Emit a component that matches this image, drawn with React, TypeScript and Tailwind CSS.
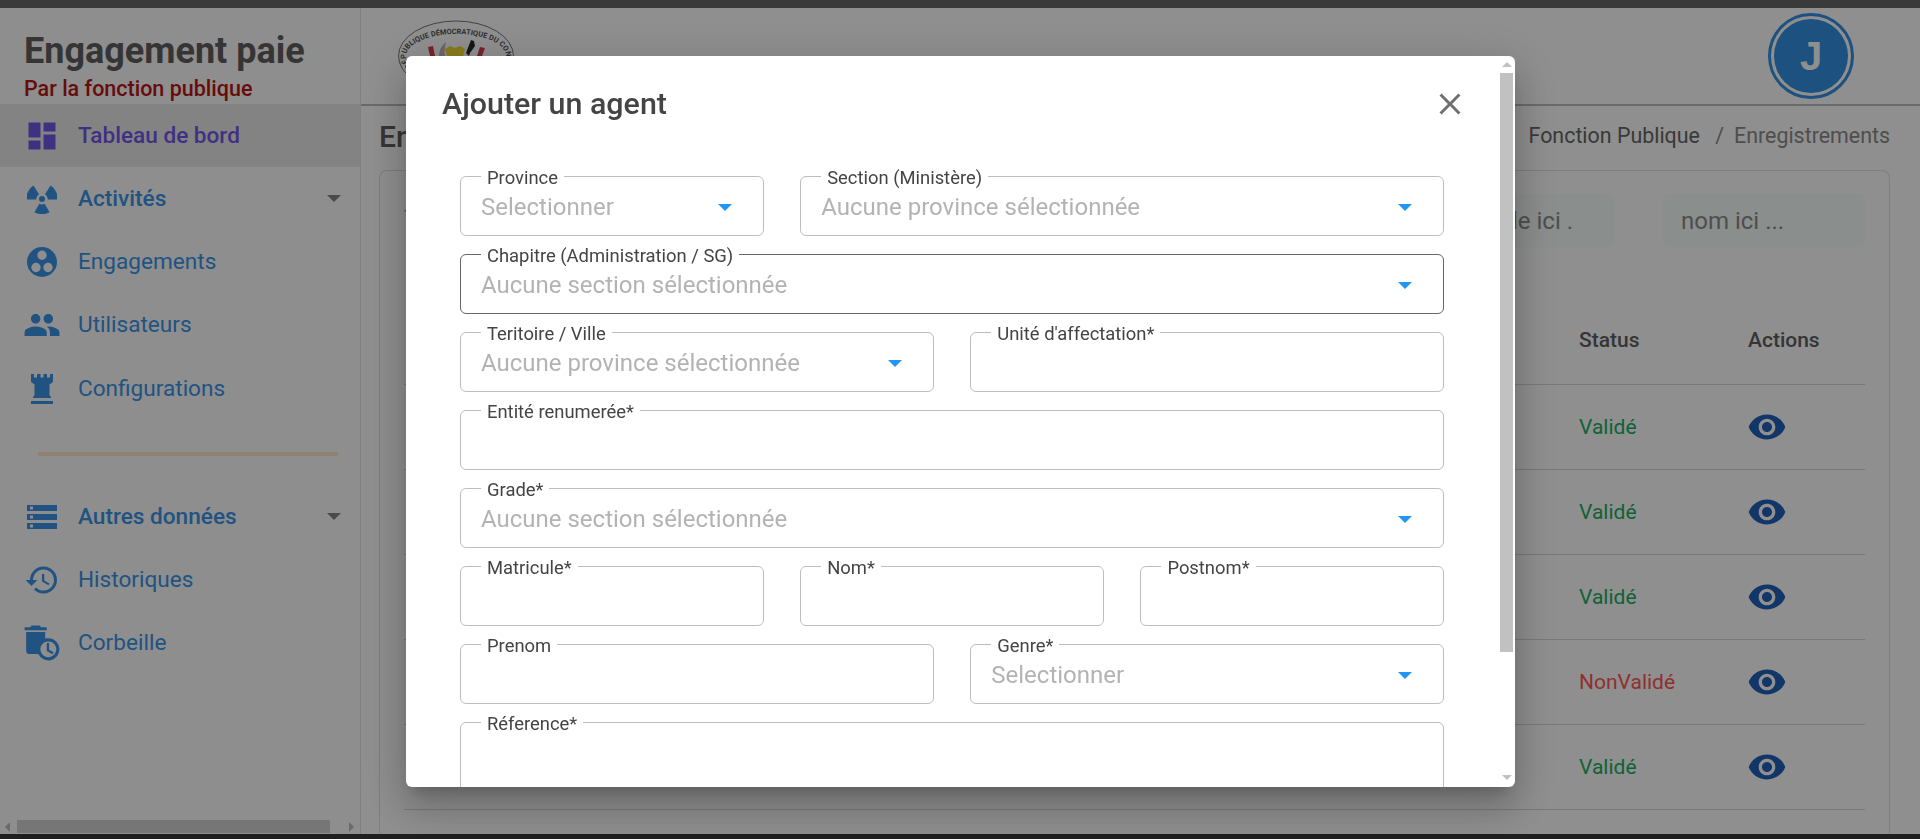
import type { ReactNode } from "react";
import { MdAutoDelete, MdClose, MdDashboard, MdHistory, MdPeople, MdStorage, MdVisibility } from "react-icons/md";

type NavItem = { label: string; icon: ReactNode; strong?: boolean; caret?: boolean };

function RadiationIcon() {
  return (
    <svg width="30" height="30" viewBox="0 0 30 30" fill="currentColor">
      <path d="M18 10.2L23.5 1.6A16 16 0 0 1 30.5 15.5H20.8A5.8 5.8 0 0 0 18 10.2Z" />
      <path d="M12 10.2L6.5 1.6A16 16 0 0 0 -0.5 15.5H9.2A5.8 5.8 0 0 1 12 10.2Z" />
      <path d="M17.6 19.8L22.6 28.2A15.5 15.5 0 0 1 7.4 28.2L12.4 19.8A5.8 5.8 0 0 0 17.6 19.8Z" />
      <circle cx="15" cy="15" r="3" />
    </svg>
  );
}

function CirclesIcon() {
  return (
    <svg width="30" height="30" viewBox="0 0 30 30" fill="currentColor">
      <path
        fillRule="evenodd"
        d="M15 0a15 15 0 1 0 0 30a15 15 0 1 0 0-30zM15 3.5a4.7 4.7 0 1 1 0 9.4a4.7 4.7 0 1 1 0-9.4zM9 15.8a4.7 4.7 0 1 1 0 9.4a4.7 4.7 0 1 1 0-9.4zM21 15.8a4.7 4.7 0 1 1 0 9.4a4.7 4.7 0 1 1 0-9.4z"
      />
    </svg>
  );
}

function RookIcon() {
  return (
    <svg width="22" height="30" viewBox="0 0 22 30" fill="currentColor">
      <path d="M0 0h3v3.5h3V0h3.5v3.5h3V0H16v3.5h3V0h3v8l-3.5 2.5V21l2 3H1.5l2-3V10.5L0 8zM0 27h22v3H0z" />
    </svg>
  );
}

const firstNav: NavItem[] = [
  { label: "Activités", icon: <RadiationIcon />, strong: true, caret: true },
  { label: "Engagements", icon: <CirclesIcon /> },
  { label: "Utilisateurs", icon: <MdPeople size={38} /> },
  { label: "Configurations", icon: <RookIcon /> },
];

const secondNav: NavItem[] = [
  { label: "Autres données", icon: <MdStorage size={36} />, strong: true, caret: true },
  { label: "Historiques", icon: <MdHistory size={36} /> },
  { label: "Corbeille", icon: <MdAutoDelete size={38} /> },
];

const rows = ["Validé", "Validé", "Validé", "NonValidé", "Validé"];

function NavRow({ item }: { item: NavItem }) {
  return (
    <div className="flex h-[63.3px] items-center text-[#3a94e8]">
      <span className="flex w-[78px] justify-center pl-[6px]">{item.icon}</span>
      <span className={`text-[22.6px] ${item.strong ? "font-medium" : ""}`}>{item.label}</span>
      {item.caret && <span className="ml-auto mr-[19px] h-0 w-0 border-x-[7.5px] border-t-[7.5px] border-x-transparent border-t-[#848484]" />}
    </div>
  );
}

function Sidebar() {
  return (
    <aside className="flex w-[361px] shrink-0 flex-col border-r border-[#e4e4e4] bg-[#fdfdfd]">
      <div className="min-h-0 flex-1 overflow-hidden">
        <div className="h-[96px] pl-[24px] pt-[21px]">
          <h1 className="text-[36px] font-bold leading-[44px] text-[#5f5f5f]">Engagement paie</h1>
          <p className="mt-[4px] text-[21.5px] font-medium leading-[24px] text-[#b81414]">Par la fonction publique</p>
        </div>
        <div className="flex h-[63px] items-center bg-[#eaeaea] text-[#7058e8]">
          <span className="flex w-[78px] justify-center pl-[6px]">
            <MdDashboard size={36} />
          </span>
          <span className="text-[22.6px] font-medium">Tableau de bord</span>
        </div>
        {firstNav.map((item) => (
          <NavRow key={item.label} item={item} />
        ))}
        <div className="mb-[29px] ml-[38px] mt-[32px] h-1 w-[300px] bg-[#ffe8c8]" />
        {secondNav.map((item) => (
          <NavRow key={item.label} item={item} />
        ))}
      </div>
      {/* barre de defilement horizontale */}
      <div className="flex h-[15px] shrink-0 items-center">
        <span className="ml-[5px] h-0 w-0 border-y-[5px] border-r-[5px] border-y-transparent border-r-[#bdbdbd]" />
        <span className="ml-[7px] h-[13px] w-[313px] bg-[#d2d2d2]" />
        <span className="ml-[19px] h-0 w-0 border-y-[5px] border-l-[5px] border-y-transparent border-l-[#bdbdbd]" />
      </div>
    </aside>
  );
}

function Seal() {
  return (
    <svg width="116" height="72" viewBox="0 0 116 72">
      <ellipse cx="58" cy="36" rx="57.5" ry="35" fill="#fff" stroke="#777" strokeWidth="1" />
      <path id="seal-arc" d="M13.5 46A50 22 0 1 1 102.5 46" fill="none" />
      <text fontFamily="Roboto, sans-serif" fontSize="7.4" fontWeight="700" fill="#555">
        <textPath href="#seal-arc">RÉPUBLIQUE DÉMOCRATIQUE DU CONGO</textPath>
      </text>
      <path d="M41 36c0-6 3-11 7-14-1 5-2 9-1 14z" fill="#bbb" />
      <path d="M47 29l5-3 5 2 5-2 5 3-2 7H49z" fill="#f4dc32" />
      <path d="M30 27l5-1 2 10h-5zM82 27l5 1-3 8h-5z" fill="#dc3a4c" />
      <path d="M68 33l5-13 3 1 1 5-5 7-1 3z" fill="#2a2a2a" />
    </svg>
  );
}

function Page() {
  return (
    <main className="flex min-w-0 flex-1 flex-col bg-white">
      <header className="flex h-[98px] shrink-0 items-center justify-between border-b-2 border-[#bdbdbd] pl-[37px] pr-[66px]">
        <Seal />
        <div className="flex h-[86px] w-[86px] items-center justify-center rounded-full border-[3px] border-[#3390e4] p-[3px]">
          <div className="flex h-full w-full items-center justify-center rounded-full bg-[#3390e4] text-[40px] font-bold text-white [font-family:'Liberation_Sans',sans-serif]">
            J
          </div>
        </div>
      </header>
      <div className="flex min-h-0 flex-1 flex-col pl-[18px] pr-[30px]">
        <div className="flex h-[64px] shrink-0 items-center justify-between pb-[3px]">
          <h2 className="text-[30px] font-medium text-[#5f5f5f]">Enregistrements</h2>
          <p className="text-[21.4px] text-[#666666]">
            Fonction Publique <span className="mx-[10px] text-[#8c8c8c]">/</span>
            <span className="text-[#8c8c8c]">Enregistrements</span>
          </p>
        </div>
        <section className="min-h-0 flex-1 rounded-t-lg border border-b-0 border-[#e0e0e0] px-[24px]">
          <div className="flex h-[78px] items-end justify-between gap-[48px] pb-[2px]">
            <span className="mb-[14px] text-[20px] text-[#3796ec]">Tableau</span>
            <div className="ml-auto flex gap-[48px]">
              <div className="flex h-[53px] w-[300px] items-center justify-end rounded-md bg-[#f7fdfa] px-[42px] text-[24px] text-[#8c8c8c]">
                matricule ici .
              </div>
              <div className="flex h-[53px] w-[202px] items-center rounded-md bg-[#f7fdfa] px-[18px] text-[24px] text-[#8c8c8c]">
                nom ici ...
              </div>
            </div>
          </div>
          <div className="grid h-[136px] grid-cols-[1175px_169px_1fr] items-end border-b border-[#d8d8d8] pb-[28px] text-[21px] font-medium leading-[32px] text-[#5f5f5f]">
            <span className="pl-[20px]">Matricule</span>
            <span>Status</span>
            <span>Actions</span>
          </div>
          {rows.map((status, i) => (
            <div key={i} className="grid h-[85px] grid-cols-[1175px_169px_1fr] items-center border-b border-[#d8d8d8]">
              <span />
              <span className={`pt-[2px] text-[21px] ${status === "Validé" ? "text-[#1ab060]" : "text-[#ff5555]"}`}>{status}</span>
              <MdVisibility size={40} className="-ml-[1px] text-[#2060b8]" />
            </div>
          ))}
        </section>
      </div>
    </main>
  );
}

function Field({ label, value, span, focused, tall }: { label: string; value?: string; span: string; focused?: boolean; tall?: boolean }) {
  return (
    <fieldset className={`${span} ${tall ? "h-[120px]" : "h-[72px]"} rounded-md border ${focused ? "border-[#666666]" : "border-[#bdbdbd]"}`}>
      <legend className="ml-5 px-[6px] pt-[4px] text-[18.4px] leading-[20px] text-[#444444]">{label}</legend>
      {value !== undefined ? (
        <div className="flex h-[47px] items-center pb-[9px] pl-5 pr-[31px] text-[24px] text-[#b3b3b3]">
          <span>{value}</span>
          <span className="ml-auto h-0 w-0 border-x-[7px] border-t-[7px] border-x-transparent border-t-[#2196f3]" />
        </div>
      ) : (
        <input className="h-[47px] w-full bg-transparent px-5 text-[24px] outline-none" />
      )}
    </fieldset>
  );
}

function AgentDialog() {
  return (
    <div className="fixed inset-0 bg-black/44">
      <div className="absolute left-[406px] top-[56px] flex h-[731px] w-[1109px] overflow-hidden rounded-md bg-white shadow-[0_11px_15px_-7px_rgba(0,0,0,0.2),0_24px_38px_3px_rgba(0,0,0,0.14),0_9px_46px_8px_rgba(0,0,0,0.12)]">
        <div className="min-w-0 flex-1">
          <div className="flex h-[108px] items-start justify-between pl-[36px] pr-[32px] pt-[28px]">
            <h2 className="text-[30.4px] font-medium leading-[40px] text-[#444444]">Ajouter un agent</h2>
            <MdClose size={36} className="mt-[2px] text-[#707070]" />
          </div>
          <div className="grid grid-cols-6 gap-x-[36.6px] gap-y-[6px] pl-[54px] pr-[56px]">
            <Field span="col-span-2" label="Province" value="Selectionner" />
            <Field span="col-span-4" label="Section (Ministère)" value="Aucune province sélectionnée" />
            <Field span="col-span-6" label="Chapitre (Administration / SG)" value="Aucune section sélectionnée" focused />
            <Field span="col-span-3" label="Teritoire / Ville" value="Aucune province sélectionnée" />
            <Field span="col-span-3" label="Unité d'affectation*" />
            <Field span="col-span-6" label="Entité renumerée*" />
            <Field span="col-span-6" label="Grade*" value="Aucune section sélectionnée" />
            <Field span="col-span-2" label="Matricule*" />
            <Field span="col-span-2" label="Nom*" />
            <Field span="col-span-2" label="Postnom*" />
            <Field span="col-span-3" label="Prenom" />
            <Field span="col-span-3" label="Genre*" value="Selectionner" />
            <Field span="col-span-6" label="Réference*" tall />
          </div>
        </div>
        {/* barre de defilement verticale */}
        <div className="flex w-[15px] shrink-0 flex-col items-start">
          <span className="ml-[2px] mt-[6px] h-0 w-0 border-x-[5px] border-b-[5px] border-x-transparent border-b-[#c1c1c1]" />
          <span className="mt-[6px] h-[579px] w-[13px] bg-[#c1c1c1]" />
          <span className="mb-[7px] ml-[2px] mt-auto h-0 w-0 border-x-[5px] border-t-[5px] border-x-transparent border-t-[#c1c1c1]" />
        </div>
      </div>
    </div>
  );
}

export default function App() {
  return (
    <div className="flex h-screen flex-col overflow-hidden bg-white font-['Roboto',sans-serif]">
      <div className="h-2 shrink-0 bg-[#686868]" />
      <div className="flex min-h-0 flex-1">
        <Sidebar />
        <Page />
      </div>
      <div className="h-[5px] shrink-0 bg-[#383838]" />
      <AgentDialog />
    </div>
  );
}
